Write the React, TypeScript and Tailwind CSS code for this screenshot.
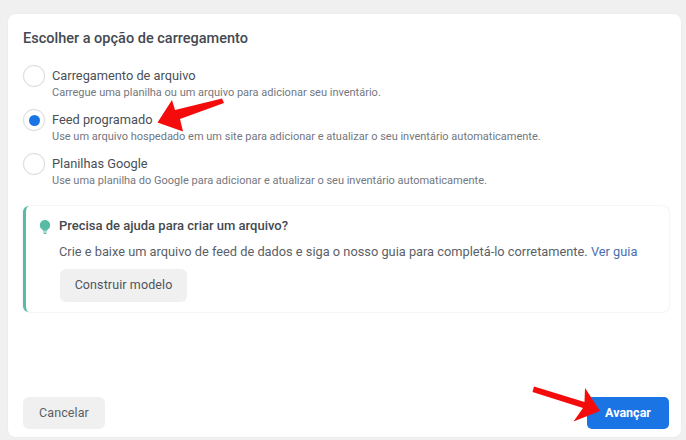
import React from "react";

function Radio({ checked }: { checked?: boolean }) {
  return (
    <div className="w-[22px] h-[22px] rounded-full border border-[#dcdee1] bg-white flex items-center justify-center shrink-0 shadow-[0_0_1px_#e5e5e5]">
      {checked && <div className="w-[11px] h-[11px] rounded-full bg-[#1b74e4]" />}
    </div>
  );
}

function Option({ title, desc, checked }: { title: string; desc: string; checked?: boolean }) {
  return (
    <div className="flex gap-[7px] h-[44px]">
      <Radio checked={checked} />
      <div className="flex flex-col pt-[1px]">
        <div className="text-[12.8px] leading-[19px] text-[#4b4f56]">{title}</div>
        <div className="text-[11px] leading-[15px] text-[#737780]">{desc}</div>
      </div>
    </div>
  );
}

export default function App() {
  return (
    <div className="relative w-[686px] h-[440px] overflow-hidden bg-[#f0f0f0] pt-[14px] pl-[8px] pr-[5px] pb-[3px] font-['Roboto',sans-serif]">
      <div className="h-full bg-white rounded-[7px] flex flex-col pl-[15px] pr-[12px] pt-[15px] pb-[8px] shadow-[0_0_1px_#d8d8d8]">
        <div className="text-[14.5px] leading-[19px] font-medium text-[#444950]">Escolher a opção de carregamento</div>
        <div className="mt-[17px] flex flex-col">
          <Option title="Carregamento de arquivo" desc="Carregue uma planilha ou um arquivo para adicionar seu inventário." />
          <Option checked title="Feed programado" desc="Use um arquivo hospedado em um site para adicionar e atualizar o seu inventário automaticamente." />
          <Option title="Planilhas Google" desc="Use uma planilha do Google para adicionar e atualizar o seu inventário automaticamente." />
        </div>
        <div className="mt-[9px] h-[106px] rounded-[6px] border-l-[3.5px] border-l-[#57bba5] bg-white shadow-[0_0_2px_#dcdcdc] flex pl-[13px] pt-[12px]">
          <svg width="12" height="16" viewBox="0 0 13 16" className="mr-[8px] mt-[1px] shrink-0">
            <path d="M6.5 0.5a5.5 5.5 0 0 0-3.2 10c.6.5.9 1 .9 1.6h4.6c0-.6.3-1.1.9-1.6a5.5 5.5 0 0 0-3.2-10z" fill="#57bba5" />
            <rect x="4.4" y="12.8" width="4.2" height="1.2" rx=".5" fill="#57bba5" />
            <rect x="5" y="14.5" width="3" height="1.2" rx=".5" fill="#57bba5" />
          </svg>
          <div className="flex flex-col items-start">
            <div className="text-[13px] leading-[16px] font-medium text-[#444950]">Precisa de ajuda para criar um arquivo?</div>
            <div className="mt-[9px] text-[12.8px] leading-[17px] text-[#5b5f67] whitespace-nowrap">
              Crie e baixe um arquivo de feed de dados e siga o nosso guia para completá-lo corretamente. <span className="text-[#4a6fb0]">Ver guia</span>
            </div>
            <button className="mt-[9px] ml-[1px] w-[127px] h-[33px] rounded-[6px] bg-[#f0f0f0] text-[12.5px] text-[#4f535b] tracking-[0.1px]">Construir modelo</button>
          </div>
        </div>
        <div className="mt-auto flex justify-between items-center">
          <button className="w-[82px] h-[32px] rounded-[6px] bg-[#f0f0f0] text-[12.5px] text-[#5b5f67] tracking-[0.1px]">Cancelar</button>
          <button className="w-[82px] h-[32px] rounded-[5px] bg-[#1b74e4] text-[12.5px] font-bold text-white">Avançar</button>
        </div>
      </div>
      <svg className="absolute left-0 top-0 pointer-events-none" width="686" height="440" viewBox="0 0 686 440">
        <path d="M222 98.5 L224 103 L180 119 L183 131.5 L157.5 122.5 L172 100 L175 110 Z" fill="#f40b0b" />
        <path d="M534 386.5 L532.5 392 L583 408 L573.5 421.5 L600 411 L585 388 L584.5 402 Z" fill="#f40b0b" />
      </svg>
    </div>
  );
}
